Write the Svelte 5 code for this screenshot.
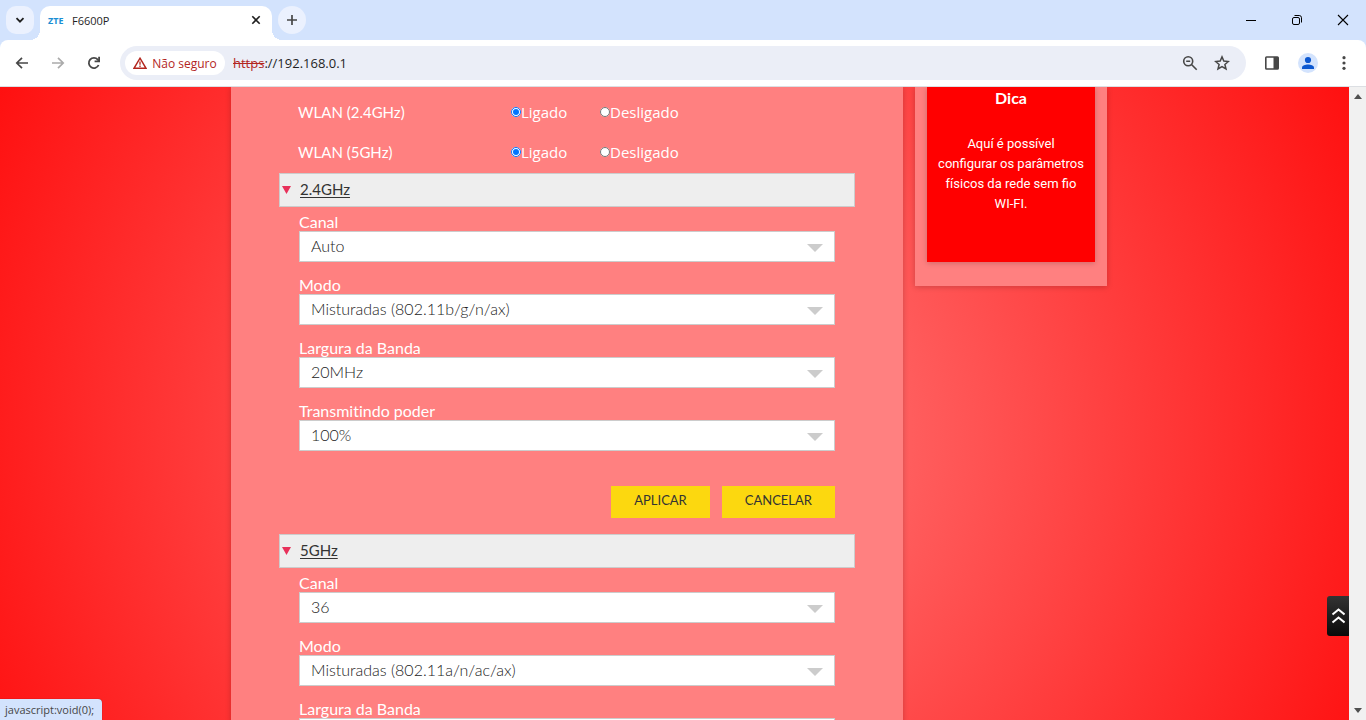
<script lang="ts">
	type Field = { id: string; label: string; options: string[] };
	type Band = { name: string; open: boolean; actions: boolean; fields: Field[] };

	let radios = $state([
		{ id: 'wlan24', label: 'WLAN (2.4GHz)', value: 'on' },
		{ id: 'wlan5', label: 'WLAN (5GHz)', value: 'on' }
	]);

	let bands: Band[] = $state([
		{
			name: '2.4GHz',
			open: true,
			actions: true,
			fields: [
				{ id: 'canal24', label: 'Canal', options: ['Auto'] },
				{ id: 'modo24', label: 'Modo', options: ['Misturadas (802.11b/g/n/ax)'] },
				{ id: 'banda24', label: 'Largura da Banda', options: ['20MHz'] },
				{ id: 'poder24', label: 'Transmitindo poder', options: ['100%'] }
			]
		},
		{
			name: '5GHz',
			open: true,
			actions: false,
			fields: [
				{ id: 'canal5', label: 'Canal', options: ['36'] },
				{ id: 'modo5', label: 'Modo', options: ['Misturadas (802.11a/n/ac/ax)'] },
				{ id: 'banda5', label: 'Largura da Banda', options: [] }
			]
		}
	]);
</script>

<div class="window">
	<header class="tabstrip">
		<button class="tab-search" aria-label="Pesquisar guias">
			<svg width="12" height="12" viewBox="0 0 12 12"><path d="M2.5 4.2 6 7.7l3.5-3.5" fill="none" stroke="#1f1f1f" stroke-width="1.8" /></svg>
		</button>
		<div class="tab">
			<span class="favicon">ZTE</span>
			<span class="tab-title">F6600P</span>
			<button class="tab-close" aria-label="Fechar">
				<svg width="10" height="10" viewBox="0 0 10 10"><path d="m1.3 1.3 7.4 7.4m0-7.4L1.3 8.7" stroke="#1f1f1f" stroke-width="1.6" /></svg>
			</button>
		</div>
		<button class="new-tab" aria-label="Nova guia">
			<svg width="12" height="12" viewBox="0 0 12 12"><path d="M6 1v10M1 6h10" stroke="#474747" stroke-width="1.7" /></svg>
		</button>
		<div class="controls">
			<button aria-label="Minimizar">
				<svg width="12" height="12" viewBox="0 0 12 12"><path d="M1 6.5h10" stroke="#000" /></svg>
			</button>
			<button aria-label="Restaurar">
				<svg width="12" height="12" viewBox="0 0 12 12" fill="none" stroke="#000"><rect x="1.5" y="3.5" width="7" height="7" rx="1.5" /><path d="M3.5 1.5h4.7a2.3 2.3 0 0 1 2.3 2.3v4.7" /></svg>
			</button>
			<button aria-label="Fechar janela">
				<svg width="12" height="12" viewBox="0 0 12 12"><path d="m1 1 10 10m0-10L1 11" stroke="#000" stroke-width="1.1" /></svg>
			</button>
		</div>
	</header>

	<nav class="toolbar">
		<button class="tool" aria-label="Voltar">
			<svg width="16" height="16" viewBox="0 0 16 16" fill="none" stroke="#474747" stroke-width="1.7"><path d="M14 8H3M8 2.8 2.8 8 8 13.2" /></svg>
		</button>
		<button class="tool" aria-label="Avançar" disabled>
			<svg width="16" height="16" viewBox="0 0 16 16" fill="none" stroke="#ababab" stroke-width="1.7"><path d="M2 8h11M8 2.8 13.2 8 8 13.2" /></svg>
		</button>
		<button class="tool" aria-label="Recarregar">
			<svg width="16" height="16" viewBox="0 0 16 16"><path d="M12.6 10A5.1 5.1 0 1 1 11.8 4.6L13 5.9" fill="none" stroke="#474747" stroke-width="1.8" /><path d="M14 1.8v5.4H8.6V5.6h3.6V1.8z" fill="#474747" /></svg>
		</button>
		<div class="omnibox">
			<button class="chip">
				<svg width="14" height="12" viewBox="0 0 14 12"><path d="M7 1.2 13 11.3H1z" fill="none" stroke="#b3261e" stroke-width="1.4" /><path d="M7 4.6v3.2M7 8.6v1.3" stroke="#b3261e" stroke-width="1.3" /></svg>
				Não seguro
			</button>
			<div class="url" role="textbox" tabindex="0" aria-label="Endereço"><s>https</s>://192.168.0.1</div>
			<button class="tool" aria-label="Zoom">
				<svg width="16" height="16" viewBox="0 0 16 16" fill="none" stroke="#474747" stroke-width="1.6"><circle cx="6.2" cy="6.2" r="4.5" /><path d="m9.5 9.5 5.2 5.2M4.2 6.2h4" /></svg>
			</button>
			<button class="tool" aria-label="Adicionar aos favoritos">
				<svg width="16" height="16" viewBox="0 0 16 16" fill="none" stroke="#474747" stroke-width="1.5"><path d="m8 1.9 1.8 4.2 4.6.4-3.5 3 1.1 4.5L8 11.6 4 14l1.1-4.5-3.5-3 4.6-.4z" /></svg>
			</button>
		</div>
		<button class="tool" aria-label="Painel lateral">
			<svg width="16" height="16" viewBox="0 0 16 16"><rect x="1.8" y="2" width="12.4" height="12" rx=".8" fill="none" stroke="#474747" stroke-width="1.6" /><path d="M9.5 2H14v12H9.5z" fill="#474747" /></svg>
		</button>
		<button class="tool" aria-label="Perfil">
			<svg width="20" height="20" viewBox="0 0 20 20"><circle cx="10" cy="10" r="10" fill="#d3e3fd" /><circle cx="10" cy="7" r="3.1" fill="#0b57d0" /><path d="M4 16v-1.6c0-2 3.4-3 6-3s6 1 6 3V16z" fill="#0b57d0" /></svg>
		</button>
		<button class="tool" aria-label="Menu">
			<svg width="16" height="16" viewBox="0 0 16 16" fill="#474747"><circle cx="8" cy="2.7" r="1.6" /><circle cx="8" cy="8" r="1.6" /><circle cx="8" cy="13.3" r="1.6" /></svg>
		</button>
	</nav>

	<div class="view">
		<div class="page">
			<main class="panel">
				{#each radios as row (row.id)}
					<div class="radio-row" role="radiogroup" aria-label={row.label}>
						<span class="radio-title">{row.label}</span>
						<label><input type="radio" name={row.id} value="on" bind:group={row.value} />Ligado</label>
						<label><input type="radio" name={row.id} value="off" bind:group={row.value} />Desligado</label>
					</div>
				{/each}

				{#each bands as band (band.name)}
					<div class="band-head">
						<svg width="9" height="8" viewBox="0 0 9 8"><path d="M0 0h9L4.5 8z" fill="#e8315b" /></svg>
						<a href="#{band.name}" onclick={() => (band.open = !band.open)}>{band.name}</a>
					</div>
					{#if band.open}
						<form class="band-body" onsubmit={(e) => e.preventDefault()}>
							{#each band.fields as field (field.id)}
								<div class="field">
									<label for={field.id}>{field.label}</label>
									<div class="select">
										<select id={field.id}>
											{#each field.options as option}
												<option>{option}</option>
											{/each}
										</select>
									</div>
								</div>
							{/each}
							{#if band.actions}
								<div class="actions">
									<button type="submit">APLICAR</button>
									<button type="reset">CANCELAR</button>
								</div>
							{/if}
						</form>
					{/if}
				{/each}
			</main>

			<aside class="side">
				<div class="tip">
					<h2>Dica</h2>
					<p>Aquí é possível configurar os parâmetros físicos da rede sem fio WI-FI.</p>
				</div>
			</aside>
			<button class="to-top" aria-label="Topo">
				<svg width="14" height="18" viewBox="0 0 14 18" fill="none" stroke="#fff" stroke-width="2"><path d="m1.5 7.5 6-5 6 5M1.5 15.500l6-5 6 5" /></svg>
			</button>
		</div>
		<div class="scrollbar">
			<svg width="8" height="5" viewBox="0 0 8 5"><path d="M0 5 4 0l4 5z" fill="#505050" /></svg>
			<svg width="8" height="5" viewBox="0 0 8 5"><path d="m0 0 4 5 4-5z" fill="#505050" /></svg>
		</div>
		<div class="status">javascript:void(0);</div>
	</div>
</div>

<style>
	:global(body) {
		margin: 0;
	}

	.window {
		display: flex;
		flex-direction: column;
		height: 100vh;
		overflow: hidden;
		background: #d3e3fd;
		font-family: 'Open Sans', 'Noto Sans', sans-serif;
		font-size: 12px;
		color: #1f1f1f;
	}

	button {
		display: flex;
		align-items: center;
		justify-content: center;
		border: 0;
		padding: 0;
		background: none;
		font: inherit;
		color: inherit;
	}

	svg {
		display: block;
		flex: none;
	}

	/* browser chrome */
	.tabstrip {
		display: flex;
		height: 40px;
		flex: none;
		padding-left: 6px;
		gap: 6px;
	}

	.tab-search,
	.new-tab {
		width: 28px;
		height: 28px;
		margin-top: 6px;
		border-radius: 10px;
		background: #ebf1fe;
	}

	.new-tab {
		border-radius: 14px;
	}

	.tab {
		position: relative;
		display: flex;
		align-items: center;
		box-sizing: border-box;
		width: 232px;
		margin-top: 6px;
		padding: 0 10px 6px 8px;
		border-radius: 10px 10px 0 0;
		background: #fff;
	}

	.tab::before,
	.tab::after {
		content: '';
		position: absolute;
		bottom: 0;
		width: 10px;
		height: 10px;
	}

	.tab::before {
		right: 100%;
		background: radial-gradient(circle at 0 0, transparent 10px, #fff 10px);
	}

	.tab::after {
		left: 100%;
		background: radial-gradient(circle at 100% 0, transparent 10px, #fff 10px);
	}

	.favicon {
		width: 24px;
		font-size: 9px;
		font-weight: 700;
		color: #1a8fd4;
	}

	.tab-title {
		flex: 1;
		font-size: 11px;
	}

	.tab-close {
		width: 12px;
		height: 16px;
	}

	.controls {
		display: flex;
		margin-left: auto;
	}

	.controls button {
		width: 46px;
	}

	.toolbar {
		display: flex;
		align-items: center;
		flex: none;
		height: 46px;
		padding: 0 4px;
		border-bottom: 1px solid #dcdfe3;
		border-radius: 8px 8px 0 0;
		background: #fff;
	}

	.tool {
		width: 36px;
		height: 34px;
	}

	.omnibox {
		display: flex;
		align-items: center;
		flex: 1;
		height: 34px;
		margin: 0 8px;
		padding: 0 8px 0 5px;
		border-radius: 17px;
		background: #ebeef7;
	}

	.omnibox .tool {
		width: 32px;
	}

	.chip {
		gap: 5px;
		width: 100px;
		height: 24px;
		border-radius: 12px;
		background: #fff;
		color: #b3261e;
	}

	.url {
		flex: 1;
		padding-left: 8px;
		font-size: 13px;
		outline: none;
	}

	.url s {
		color: #b3261e;
	}

	/* router page */
	.view {
		position: relative;
		display: flex;
		flex: 1;
		min-height: 0;
	}

	.page {
		position: relative;
		display: flex;
		align-items: flex-start;
		justify-content: center;
		gap: 12px;
		flex: 1;
		min-width: 0;
		padding-right: 11px;
		overflow: hidden;
		background: radial-gradient(circle farthest-corner at 50% 55%, #ff8080, #ff1010);
		font-family: Lato, sans-serif;
		font-size: 16px;
		color: #fff;
	}

	.panel {
		box-sizing: border-box;
		flex: 0 1 672px;
		padding: 6px 48px 0;
		background: #ff8080;
		box-shadow: 0 1px 6px rgba(0, 0, 0, 0.2);
	}

	.radio-row {
		display: flex;
		align-items: center;
		box-sizing: border-box;
		height: 40px;
		padding: 0 0 2px 19px;
	}

	.radio-title {
		width: 213px;
		font-size: 15px;
	}

	.radio-row label {
		display: flex;
		align-items: center;
		width: 89px;
		font-family: 'Open Sans', sans-serif;
		font-size: 15px;
		font-weight: 500;
	}

	.radio-row input {
		width: 10px;
		height: 10px;
		margin: 0;
		flex: none;
	}

	.band-head {
		display: flex;
		align-items: center;
		box-sizing: border-box;
		height: 34px;
		padding-left: 2px;
		gap: 9px;
		border: 1px solid #ccc;
		background: #eee;
	}

	.band-head a {
		padding-bottom: 2px;
		font-size: 15px;
		color: #333;
		text-underline-offset: 2px;
	}

	.band-body {
		padding: 8px 20px 16px;
	}

	.field {
		margin-bottom: 16px;
	}

	.field label {
		display: block;
		height: 16px;
		line-height: 14px;
		font-variant-ligatures: none;
	}

	.select {
		position: relative;
	}

	.select::after {
		content: '';
		position: absolute;
		top: 13px;
		right: 12px;
		border: 8px solid transparent;
		border-top-color: #ccc;
		border-bottom: 0;
		pointer-events: none;
	}

	select {
		display: block;
		box-sizing: border-box;
		width: 100%;
		height: 31px;
		padding: 0 11px 2px;
		border: 1px solid #ccc;
		border-radius: 0;
		appearance: none;
		background: #fff;
		font: 300 16px Lato, sans-serif;
		color: #222;
	}

	.actions {
		display: flex;
		justify-content: flex-end;
		gap: 12px;
		padding-top: 19px;
	}

	.actions button {
		height: 32px;
		padding: 0 23px 4px;
		background: #fcd80f;
		font-size: 13px;
		color: #333;
	}

	.side {
		box-sizing: border-box;
		flex: 0 0 192px;
		padding: 0 12px 24px;
		background: #ff8080;
		box-shadow: 0 1px 6px rgba(0, 0, 0, 0.2);
	}

	.tip {
		padding: 1px 10px 48px;
		background: #f00;
		box-shadow: 0 1px 6px rgba(0, 0, 0, 0.2);
		text-align: center;
	}

	.tip h2 {
		margin: 0 0 26px;
		font-size: 16px;
		line-height: 20px;
	}

	.tip p {
		margin: 0;
		font: 13px/20px Roboto, sans-serif;
	}

	.to-top {
		position: absolute;
		right: 0;
		bottom: 84px;
		width: 22px;
		height: 40px;
		border-radius: 3px 0 0 3px;
		background: linear-gradient(#333, #0a0a0a);
	}

	.scrollbar {
		display: flex;
		flex-direction: column;
		align-items: center;
		justify-content: space-between;
		box-sizing: border-box;
		width: 17px;
		padding: 7px 0;
		background: #f1f1f1;
	}

	.status {
		position: absolute;
		left: 0;
		bottom: 0;
		box-sizing: border-box;
		height: 21px;
		padding: 0 8px 0 5px;
		border-radius: 0 4px 0 0;
		background: #d3e3fd;
		box-shadow: 0 0 1px rgba(0, 0, 0, 0.5);
		font-size: 11px;
		line-height: 21px;
		color: #474747;
	}
</style>
